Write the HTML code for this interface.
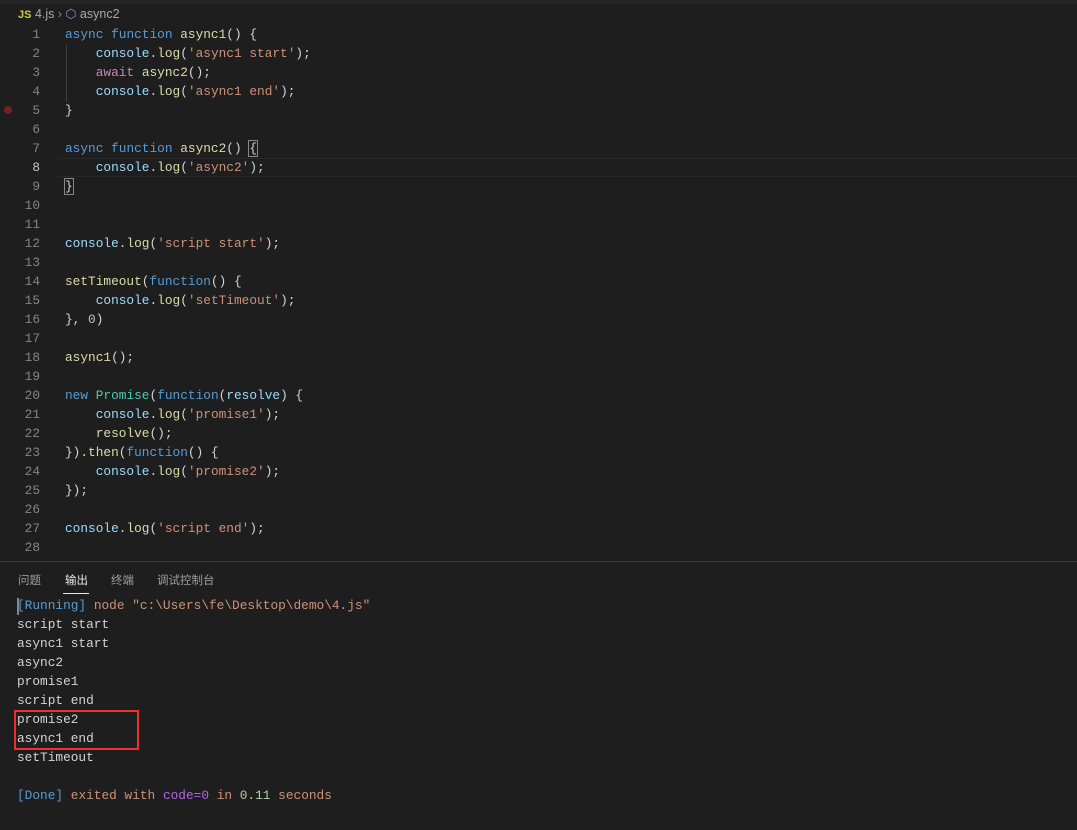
<!DOCTYPE html>
<html><head><meta charset="utf-8"><style>
body{margin:0;width:1077px;height:830px;background:#1e1e1e;overflow:hidden;position:relative;font-family:"Liberation Mono",monospace;font-size:12.8px;color:#d4d4d4}
.top{position:absolute;left:0;top:0;width:1077px;height:4px;background:#252526}
.bc{position:absolute;left:18px;top:5px;font-family:"Liberation Sans",sans-serif;font-size:12.5px;color:#a9a9a9;line-height:18px}
.ln{position:absolute;left:0;width:40px;text-align:right;color:#858585}
.cd{position:absolute;left:65px;white-space:pre}
.k{color:#569cd6}.f{color:#dcdcaa}.s{color:#ce9178}.v{color:#9cdcfe}.a{color:#c586c0}.n{color:#b5cea8}
.row{position:absolute;height:19px;line-height:19px}
.panel{position:absolute;left:0;top:561px;width:1077px;border-top:1px solid #3c3c3c}
.tab{position:absolute;top:572px;font-family:"Liberation Sans","Noto Sans CJK SC",sans-serif;font-size:11.5px;color:#9d9d9d}
.out{position:absolute;left:17px;white-space:pre;line-height:19px}
</style></head><body>
<div class="top"></div>
<div class="bc"><span style="color:#cbcb41;font-weight:bold;font-size:11px">JS</span> 4.js <span style="color:#888">›</span> <span style="color:#b180d7">⬡</span> async2</div>
<div style="position:absolute;left:58px;top:158px;width:1019px;height:17px;border-top:1px solid #282828;border-bottom:1px solid #282828"></div>
<div style="position:absolute;left:66px;top:45px;width:1px;height:57px;background:#404040"></div>
<div style="position:absolute;left:4px;top:106px;width:8px;height:8px;border-radius:50%;background:#7a1f1f"></div>
<div id="code"></div>
<script>
var L=[
'<span class="k">async</span> <span class="k">function</span> <span class="f">async1</span>() {',
'    <span class="v">console</span>.<span class="f">log</span>(<span class="s">\'async1 start\'</span>);',
'    <span class="a">await</span> <span class="f">async2</span>();',
'    <span class="v">console</span>.<span class="f">log</span>(<span class="s">\'async1 end\'</span>);',
'}','',
'<span class="k">async</span> <span class="k">function</span> <span class="f">async2</span>() <span style="outline:1px solid #888">{</span>',
'    <span class="v">console</span>.<span class="f">log</span>(<span class="s">\'async2\'</span>);',
'<span style="outline:1px solid #888">}</span>','','',
'<span class="v">console</span>.<span class="f">log</span>(<span class="s">\'script start\'</span>);','',
'<span class="f">setTimeout</span>(<span class="k">function</span>() {',
'    <span class="v">console</span>.<span class="f">log</span>(<span class="s">\'setTimeout\'</span>);',
'}, <span class="n">0</span>)','',
'<span class="f">async1</span>();','',
'<span class="k">new</span> <span class="v" style="color:#4ec9b0">Promise</span>(<span class="k">function</span>(<span class="v">resolve</span>) {',
'    <span class="v">console</span>.<span class="f">log</span>(<span class="s">\'promise1\'</span>);',
'    <span class="f">resolve</span>();',
'}).<span class="f">then</span>(<span class="k">function</span>() {',
'    <span class="v">console</span>.<span class="f">log</span>(<span class="s">\'promise2\'</span>);',
'});','',
'<span class="v">console</span>.<span class="f">log</span>(<span class="s">\'script end\'</span>);',''];
var h='';
for(var i=0;i<L.length;i++){var t=25+19*i;
h+='<div class="row ln" style="top:'+t+'px;'+(i==7?'color:#c6c6c6':'')+'">'+(i+1)+'</div><div class="row cd" style="top:'+t+'px">'+L[i]+'</div>';}
document.getElementById('code').innerHTML=h;
</script>
<div class="panel"></div>
<div class="tab" style="left:18px">问题</div>
<div class="tab" style="left:65px;color:#e7e7e7">输出</div>
<div style="position:absolute;left:63px;top:593px;width:26px;height:1px;background:#e7e7e7"></div>
<div class="tab" style="left:111px">终端</div>
<div class="tab" style="left:157px">调试控制台</div>
<div style="position:absolute;left:17px;top:598px;width:2px;height:17px;background:#888"></div>
<div class="out" style="top:596px"><span class="k">[Running]</span> <span class="s">node "c:\Users\fe\Desktop\demo\4.js"</span>
script start
async1 start
async2
promise1
script end
promise2
async1 end
setTimeout

<span class="k">[Done]</span> <span class="s">exited with</span> <span style="color:#b267e6">code=0</span> <span class="s">in</span> <span class="n">0.11</span> <span class="s">seconds</span></div>
<div style="position:absolute;left:14px;top:710px;width:121px;height:36px;border:2px solid #f03030"></div>
</body></html>
